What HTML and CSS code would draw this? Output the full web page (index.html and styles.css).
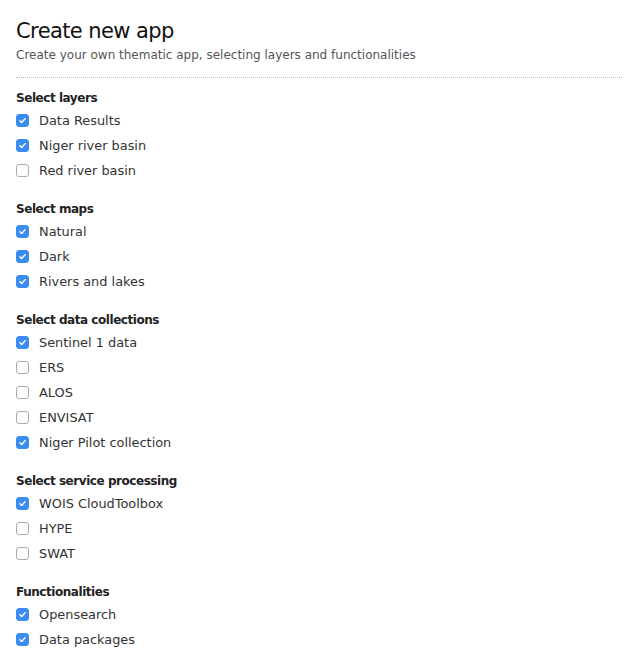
FILE: index.html
```html
<!DOCTYPE html>
<html>
<head>
<meta charset="utf-8">
<link rel="stylesheet" href="styles.css">
</head>
<body>
<div class="page">
  <header class="head">
    <h1 class="title">Create new app</h1>
    <p class="subtitle">Create your own thematic app, selecting layers and functionalities</p>
  </header>

  <section class="group">
    <h2 class="group-title">Select layers</h2>
    <label class="opt"><span class="box on"><svg viewBox="0 0 13 13"><path d="M3.5 6.8 L5.6 8.9 L9.6 4.3"/></svg></span>Data Results</label>
    <label class="opt"><span class="box on"><svg viewBox="0 0 13 13"><path d="M3.5 6.8 L5.6 8.9 L9.6 4.3"/></svg></span>Niger river basin</label>
    <label class="opt"><span class="box"></span>Red river basin</label>
  </section>

  <section class="group">
    <h2 class="group-title">Select maps</h2>
    <label class="opt"><span class="box on"><svg viewBox="0 0 13 13"><path d="M3.5 6.8 L5.6 8.9 L9.6 4.3"/></svg></span>Natural</label>
    <label class="opt"><span class="box on"><svg viewBox="0 0 13 13"><path d="M3.5 6.8 L5.6 8.9 L9.6 4.3"/></svg></span>Dark</label>
    <label class="opt"><span class="box on"><svg viewBox="0 0 13 13"><path d="M3.5 6.8 L5.6 8.9 L9.6 4.3"/></svg></span>Rivers and lakes</label>
  </section>

  <section class="group">
    <h2 class="group-title">Select data collections</h2>
    <label class="opt"><span class="box on"><svg viewBox="0 0 13 13"><path d="M3.5 6.8 L5.6 8.9 L9.6 4.3"/></svg></span>Sentinel 1 data</label>
    <label class="opt"><span class="box"></span>ERS</label>
    <label class="opt"><span class="box"></span>ALOS</label>
    <label class="opt"><span class="box"></span>ENVISAT</label>
    <label class="opt"><span class="box on"><svg viewBox="0 0 13 13"><path d="M3.5 6.8 L5.6 8.9 L9.6 4.3"/></svg></span>Niger Pilot collection</label>
  </section>

  <section class="group">
    <h2 class="group-title">Select service processing</h2>
    <label class="opt"><span class="box on"><svg viewBox="0 0 13 13"><path d="M3.5 6.8 L5.6 8.9 L9.6 4.3"/></svg></span>WOIS CloudToolbox</label>
    <label class="opt"><span class="box"></span>HYPE</label>
    <label class="opt"><span class="box"></span>SWAT</label>
  </section>

  <section class="group">
    <h2 class="group-title">Functionalities</h2>
    <label class="opt"><span class="box on"><svg viewBox="0 0 13 13"><path d="M3.5 6.8 L5.6 8.9 L9.6 4.3"/></svg></span>Opensearch</label>
    <label class="opt"><span class="box on"><svg viewBox="0 0 13 13"><path d="M3.5 6.8 L5.6 8.9 L9.6 4.3"/></svg></span>Data packages</label>
  </section>
</div>
</body>
</html>
```

FILE: styles.css
```css
html, body {
  margin: 0;
  padding: 0;
  background: #fff;
}
body {
  font-family: "DejaVu Sans", Verdana, sans-serif;
  color: #333;
}
.page {
  padding: 16px 0 0 16px;
  width: 606px;
}
.head {
  border-bottom: 1px dotted #bbb;
  padding-bottom: 14px;
  margin-bottom: 12px;
}
.title {
  margin: 0;
  font-weight: normal;
  font-size: 21px;
  letter-spacing: -0.6px;
  line-height: 30px;
  color: #111;
}
.subtitle {
  margin: 1px 0 0 0;
  font-size: 12px;
  line-height: 16px;
  color: #555;
}
.group {
  display: flex;
  flex-direction: column;
  margin-bottom: 18px;
}
.group-title {
  margin: 0 0 2px 0;
  font-size: 12px;
  letter-spacing: -0.45px;
  line-height: 16px;
  font-weight: bold;
  color: #222;
}
.opt {
  display: flex;
  align-items: center;
  height: 25px;
  font-size: 12.9px;
  color: #333;
}
.box {
  width: 11px;
  height: 11px;
  border: 1px solid #aaa;
  border-radius: 3px;
  margin-right: 10px;
  background: #fff;
  display: flex;
}
.box.on {
  background: #3b8cf0;
  border-color: #3b8cf0;
}
.box svg {
  width: 11px;
  height: 11px;
}
.box svg path {
  fill: none;
  stroke: #fff;
  stroke-width: 1.7;
  stroke-linecap: round;
  stroke-linejoin: round;
}
```
